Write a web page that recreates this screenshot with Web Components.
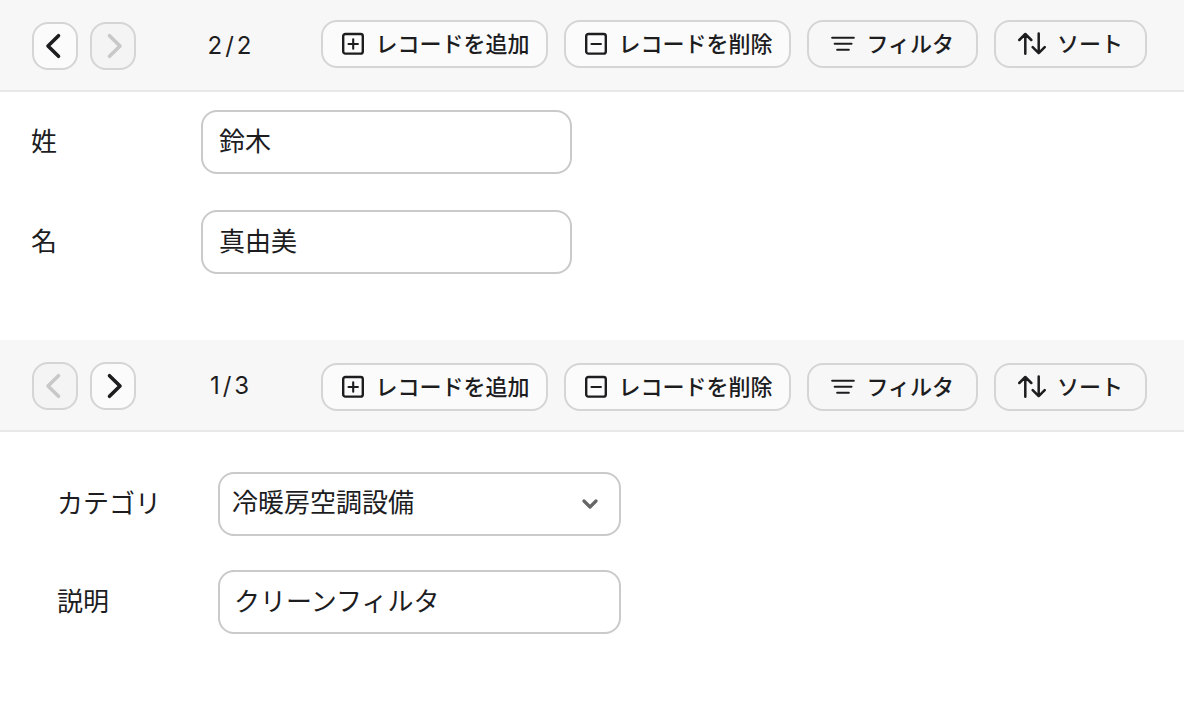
<!DOCTYPE html>
<html lang="ja">
<head>
<meta charset="utf-8">
<title>レコード</title>
<style>
  body {
    margin: 0;
    background: #fff;
    color: #1d1d1f;
    font-family: Inter, "Noto Sans CJK JP", sans-serif;
  }
  main { padding-right: 4px; }
</style>
</head>
<body>
<main>
  <record-panel>
    <record-toolbar slot="toolbar" position="2" total="2" style="--actions-top: 20px; --nav-top: 22px"></record-toolbar>
    <record-form>
      <record-field label="姓" value="鈴木"></record-field>
      <record-field label="名" value="真由美"></record-field>
    </record-form>
  </record-panel>
  <record-panel>
    <record-toolbar slot="toolbar" position="1" total="3" style="--actions-top: 23px; --nav-top: 22px"></record-toolbar>
    <record-form related>
      <record-field label="カテゴリ" value="冷暖房空調設備" type="select"></record-field>
      <record-field label="説明" value="クリーンフィルタ"></record-field>
    </record-form>
  </record-panel>
</main>
<script>
  const icons = {
    prev: '<svg width="24" height="28" viewBox="0 0 24 28" stroke-width="3.6"><path d="M15.5 3.7 L5 14 L15.5 24.3"/></svg>',
    next: '<svg width="24" height="28" viewBox="0 0 24 28" stroke-width="3.6"><path d="M8.5 3.7 L19 14 L8.5 24.3"/></svg>',
    add: '<svg width="24" height="24" viewBox="0 0 24 24" stroke-width="2.4"><rect x="2.2" y="2" width="19.6" height="19.6" rx="2.2"/><path d="M7.5 12h9.4M12.2 7.2v9.6" stroke-width="2.1"/></svg>',
    remove: '<svg width="24" height="24" viewBox="0 0 24 24" stroke-width="2.4"><rect x="2.2" y="2" width="19.6" height="19.6" rx="2.2"/><path d="M7.5 12h9.4" stroke-width="2.1"/></svg>',
    filter: '<svg width="24" height="24" viewBox="0 0 24 24" stroke-width="2.1"><path d="M1.2 5.7h21.6M3.7 11.7h16.8M6.2 17.7h11.6"/></svg>',
    sort: '<svg width="28" height="24" viewBox="1 0 28 24" stroke-width="2.5"><path d="M8.3 21.8V2.5M2.3 8L8.3 2L14.3 8M21.7 1.6V21M15.7 15.2L21.7 21.2L27.7 15.2"/></svg>'
  };

  class RecordPanel extends HTMLElement {
    connectedCallback() {
      this.attachShadow({ mode: "open" }).innerHTML = `
        <style>:host { display: block; min-height: 340px; }</style>
        <slot name="toolbar"></slot>
        <slot></slot>`;
    }
  }

  class NavButton extends HTMLElement {
    connectedCallback() {
      const off = this.hasAttribute("disabled");
      this.attachShadow({ mode: "open" }).innerHTML = `
        <style>
          :host { display: block; }
          button {
            display: flex; align-items: center; justify-content: center;
            box-sizing: border-box; width: 46px; height: 48px; padding: 0;
            border: 2px solid #d5d5d5; border-radius: 16px;
            background: #fbfbfb; color: #1d1d1f;
          }
          button:disabled { background: #f4f4f4; color: #c8c8c8; }
          svg { fill: none; stroke: currentColor; stroke-linecap: round; stroke-linejoin: round; }
        </style>
        <button type="button" aria-label="${this.getAttribute("label")}" ${off ? "disabled" : ""}>${icons[this.getAttribute("icon")]}</button>`;
    }
  }

  class ActionButton extends HTMLElement {
    connectedCallback() {
      this.attachShadow({ mode: "open" }).innerHTML = `
        <style>
          :host { display: block; }
          button {
            display: flex; align-items: center; gap: 10px;
            box-sizing: border-box; height: 48px; padding: 0 17px 0 18px;
            border: 2px solid #d5d5d5; border-radius: 16px;
            background: #fbfbfb; color: #1d1d1f;
            font: 500 22px/32px "Noto Sans CJK JP", sans-serif; white-space: nowrap;
          }
          :host([plain]) button { gap: 11px; background: #f7f7f7; padding: 0 22px; }
          span { padding-bottom: 4px; }
          svg { flex: none; fill: none; stroke: currentColor; stroke-linecap: round; stroke-linejoin: round; }
        </style>
        <button type="button">${icons[this.getAttribute("icon")]}<span><slot></slot></span></button>`;
    }
  }

  class RecordToolbar extends HTMLElement {
    connectedCallback() {
      const position = Number(this.getAttribute("position"));
      const total = Number(this.getAttribute("total"));
      this.attachShadow({ mode: "open" }).innerHTML = `
        <style>
          :host {
            display: flex; align-items: flex-start; justify-content: space-between;
            box-sizing: border-box; height: 92px; padding: 0 37px 0 32px;
            background: #f7f7f7; border-bottom: 2px solid #e8e8e8;
          }
          .nav { display: flex; align-items: center; gap: 12px; padding-top: var(--nav-top); }
          .count { width: 166px; text-align: center; font-size: 24px; line-height: 32px; letter-spacing: 3px; }
          .actions { display: flex; gap: 16px; padding-top: var(--actions-top); }
        </style>
        <div class="nav">
          <nav-button icon="prev" label="前のレコード" ${position <= 1 ? "disabled" : ""}></nav-button>
          <nav-button icon="next" label="次のレコード" ${position >= total ? "disabled" : ""}></nav-button>
          <span class="count">${position}/${total}</span>
        </div>
        <div class="actions">
          <action-button icon="add">レコードを追加</action-button>
          <action-button icon="remove">レコードを削除</action-button>
          <action-button icon="filter" plain>フィルタ</action-button>
          <action-button icon="sort" plain>ソート</action-button>
        </div>`;
    }
  }

  class RecordForm extends HTMLElement {
    connectedCallback() {
      this.attachShadow({ mode: "open" }).innerHTML = `
        <style>
          :host {
            display: flex; flex-direction: column; gap: 36px; padding: 18px 31px;
            --label-width: 170px; --control-width: 371px; --pad: 16px;
          }
          :host([related]) {
            gap: 34px; padding: 40px 57px;
            --label-width: 161px; --control-width: 403px; --pad: 14px;
          }
        </style>
        <slot></slot>`;
    }
  }

  class RecordField extends HTMLElement {
    connectedCallback() {
      const value = this.getAttribute("value");
      const control = this.getAttribute("type") === "select"
        ? `<select id="control"><option>${value}</option></select>
           <svg width="16" height="12" viewBox="0 0 16 12" aria-hidden="true"><path d="M2 3L8 9L14 3"/></svg>`
        : `<input id="control" type="text" value="${value}">`;
      this.attachShadow({ mode: "open" }).innerHTML = `
        <style>
          :host { display: flex; align-items: center; font: 26px/40px "Noto Sans CJK JP", sans-serif; }
          label { flex: none; width: var(--label-width); padding-bottom: 4px; }
          .box { display: grid; align-items: center; width: var(--control-width); }
          input, select {
            grid-area: 1 / 1; appearance: none; box-sizing: border-box;
            width: 100%; height: 64px; margin: 0; padding: 0 var(--pad) 6px;
            border: 2px solid #cacaca; border-radius: 16px;
            background: #fff; color: inherit; font: inherit;
          }
          select { padding-left: 12px; }
          svg {
            grid-area: 1 / 1; justify-self: end; margin-right: 23px; pointer-events: none;
            fill: none; stroke: #666; stroke-width: 3.2; stroke-linecap: round; stroke-linejoin: round;
          }
        </style>
        <label for="control">${this.getAttribute("label")}</label>
        <div class="box">${control}</div>`;
    }
  }

  customElements.define("nav-button", NavButton);
  customElements.define("action-button", ActionButton);
  customElements.define("record-toolbar", RecordToolbar);
  customElements.define("record-field", RecordField);
  customElements.define("record-form", RecordForm);
  customElements.define("record-panel", RecordPanel);
</script>
</body>
</html>
